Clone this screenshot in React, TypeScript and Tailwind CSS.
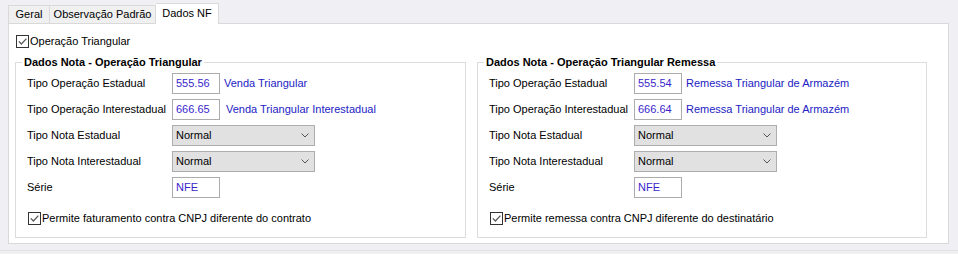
import type { ReactNode } from "react"

function Check({ label, className = "" }: { label: string; className?: string }) {
  return (
    <label className={"flex h-[13px] items-center " + className}>
      <span className="flex size-[13px] shrink-0 items-center justify-center border border-[#333333] bg-white">
        <svg viewBox="0 0 11 11" className="size-[11px]" aria-hidden>
          <path d="M1.8 5.4 L4.4 8 L9.4 2.6" fill="none" stroke="#5a5a5a" strokeWidth="1.3" />
        </svg>
      </span>
      <span className="ml-px whitespace-nowrap">{label}</span>
    </label>
  )
}

function Group({ title, className = "", children }: { title: string; className?: string; children: ReactNode }) {
  return (
    <div className={"relative flex flex-col border border-[#dcdcdc] pl-[11px] pt-[10px] " + className}>
      <span className="absolute -top-[9px] left-[6px] bg-white px-[2px] font-bold whitespace-nowrap">{title}</span>
      {children}
    </div>
  )
}

function Row({ label, children }: { label: string; children: ReactNode }) {
  return (
    <div className="flex h-[21px] items-center">
      <span className="w-[145px] shrink-0 whitespace-nowrap">{label}</span>
      {children}
    </div>
  )
}

function Field({ value, desc, gap = "ml-[4px]" }: { value: string; desc?: string; gap?: string }) {
  return (
    <>
      <span className="flex h-[21px] w-[48px] items-center border border-[#acacac] bg-white px-[3px] text-[#3a1fcc]">
        {value}
      </span>
      {desc && <span className={"whitespace-nowrap text-[#2222c4] " + gap}>{desc}</span>}
    </>
  )
}

function Select({ value }: { value: string }) {
  return (
    <span className="flex h-[21px] w-[143px] items-center justify-between border border-[#adadad] bg-[#e1e1e1] pl-[3px] pr-[5px]">
      {value}
      <svg viewBox="0 0 8 5" className="h-[5px] w-[8px]" aria-hidden>
        <path d="M0.5 0.5 L4 4 L7.5 0.5" fill="none" stroke="#555555" strokeWidth="1" />
      </svg>
    </span>
  )
}

function NoteGroup(props: {
  title: string
  est: [string, string]
  inter: [string, string]
  interGap?: string
  check: string
  className: string
}) {
  return (
    <Group title={props.title} className={props.className}>
      <div className="flex flex-col gap-[5px]">
        <Row label="Tipo Operação Estadual">
          <Field value={props.est[0]} desc={props.est[1]} />
        </Row>
        <Row label="Tipo Operação Interestadual">
          <Field value={props.inter[0]} desc={props.inter[1]} gap={props.interGap} />
        </Row>
        <Row label="Tipo Nota Estadual">
          <Select value="Normal" />
        </Row>
        <Row label="Tipo Nota Interestadual">
          <Select value="Normal" />
        </Row>
        <Row label="Série">
          <Field value="NFE" />
        </Row>
      </div>
      <Check label={props.check} className="mt-[14px] ml-px" />
    </Group>
  )
}

export default function App() {
  return (
    <div className="flex h-[254px] w-[958px] flex-col bg-[#f0f0f4] font-['Liberation_Sans',Arial,sans-serif] text-[11px] text-black">
      <div className="flex h-[23px] items-end pl-[8px]">
        <div className="flex h-[18px] w-[42px] items-center justify-center border border-b-0 border-[#d9d9d9] bg-[#f0f0f0]">Geral</div>
        <div className="flex h-[18px] w-[106px] items-center justify-center border border-b-0 border-l-0 border-[#d9d9d9] bg-[#f0f0f0]">
          Observação Padrão
        </div>
        <div className="relative z-10 -mb-px flex h-[21px] w-[63px] items-center justify-center border border-b-0 border-l-0 border-[#d9d9d9] bg-white pb-px">
          Dados NF
        </div>
      </div>
      <div className="ml-[8px] flex h-[221px] w-[941px] flex-col border border-[#d9d9d9] bg-white pl-[7px] pt-[11px]">
        <Check label="Operação Triangular" />
        <div className="mt-[14px] flex">
          <NoteGroup
            title="Dados Nota - Operação Triangular"
            est={["555.56", "Venda Triangular"]}
            inter={["666.65", "Venda Triangular Interestadual"]}
            interGap="ml-[6px]"
            check="Permite faturamento contra CNPJ diferente do contrato"
            className="ml-[-1px] h-[176px] w-[451px]"
          />
          <NoteGroup
            title="Dados Nota - Operação Triangular Remessa"
            est={["555.54", "Remessa Triangular de Armazém"]}
            inter={["666.64", "Remessa Triangular de Armazém"]}
            check="Permite remessa contra CNPJ diferente do destinatário"
            className="ml-[11px] h-[176px] w-[450px]"
          />
        </div>
      </div>
      <div className="mt-[6px] flex-1 border-t border-[#e2e2e6] bg-[#f0f0f0]" />
    </div>
  )
}
